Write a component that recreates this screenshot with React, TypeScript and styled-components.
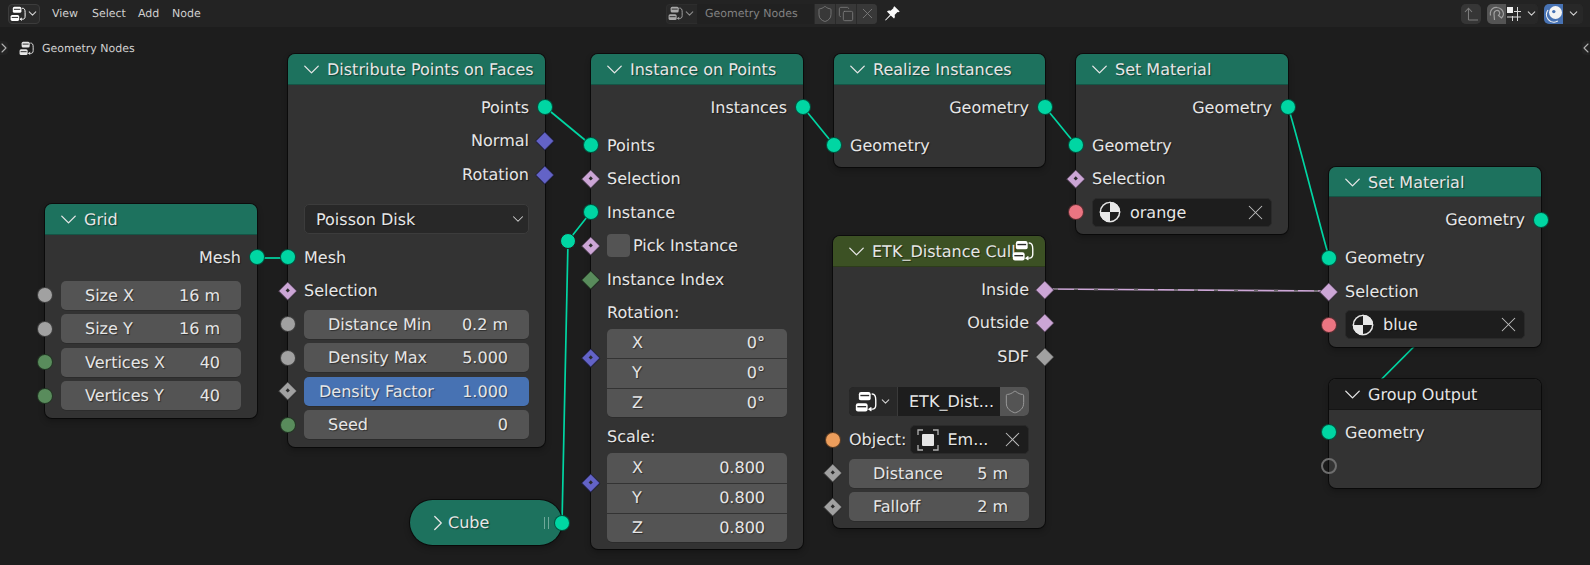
import React from 'react';
import styled, { createGlobalStyle } from 'styled-components';
import { ChevronDown, ChevronRight, X, Shield, Copy } from 'lucide-react';

const TEAL = '#00d6a3';
const BOOL = '#cca6d6';
const VEC = '#6363c7';
const FLOAT = '#a1a1a1';
const INT = '#598c5c';
const MAT = '#eb7582';
const OBJ = '#ed9e5c';

const GlobalStyle = createGlobalStyle`
    html, body { margin: 0; padding: 0; background: #1d1d1d; }
    body {
        font-family: "DejaVu Sans", "Liberation Sans", sans-serif;
        text-rendering: geometricPrecision;
    }
`;

const Page = styled.div`
    position: relative;
    width: 1590px;
    height: 565px;
    overflow: hidden;
    background: #1d1d1d;
    color: #e6e6e6;
`;

/* top bar */
const TopBar = styled.div`
    position: relative;
    z-index: 3;
    display: grid;
    grid-template-columns: 658px auto 1fr;
    align-items: center;
    height: 27px;
    padding: 0 7px 0 8px;
    background: #232323;
    font-size: 11px;
    color: #d0d0d0;
`;
const BarGroup = styled.div`
    display: flex;
    align-items: center;
`;
const BarEnd = styled(BarGroup)`
    justify-content: flex-end;
`;
const EditorButton = styled.div`
    display: flex;
    align-items: center;
    justify-content: center;
    width: 32px;
    height: 20px;
    box-sizing: border-box;
    border: 1px solid #3c3c3c;
    border-radius: 4px;
    background: #2a2a2a;
`;
const Menu = styled.span<{ $w: number }>`
    width: ${(p) => p.$w}px;
    white-space: nowrap;
`;
const Menus = styled(BarGroup)`
    margin-left: 12px;
`;
const Datablock = styled(BarGroup)`
    height: 20px;
    width: 211px;
    border-radius: 4px;
    overflow: hidden;
    background: #282828;
    box-shadow: inset 0 0 0 1px #2e2e2e;
`;
const DbIcon = styled.div`
    display: flex;
    align-items: center;
    justify-content: center;
    width: 31px;
    height: 100%;
    opacity: 0.6;
    border-right: 1px solid #1d1d1d;
`;
const DbName = styled.div`
    flex: 1;
    padding-left: 7px;
    font-size: 11px;
    line-height: 20px;
    color: #828282;
    background: #212121;
`;
const DbAction = styled.div`
    display: flex;
    align-items: center;
    justify-content: center;
    width: 20px;
    height: 100%;
    background: #383838;
    border-left: 1px solid #2a2a2a;
    color: #808080;
`;
const PinSlot = styled.div`
    display: flex;
    margin-left: 7px;
`;
const IconBtn = styled.div<{ $w: number; $bg: string }>`
    display: flex;
    align-items: center;
    justify-content: center;
    gap: 3px;
    width: ${(p) => p.$w}px;
    height: 20px;
    background: ${(p) => p.$bg};
`;
const Joined = styled(BarGroup)`
    margin-left: 6px;
    border-radius: 5px;
    overflow: hidden;
    box-shadow: inset 0 0 0 1px #2e2e2e;
`;
const Breadcrumb = styled.div`
    position: absolute;
    left: 19px;
    top: 40px;
    z-index: 3;
    display: flex;
    align-items: center;
    gap: 8px;
    height: 16px;
    font-size: 11px;
    color: #d0d0d0;
`;
const EdgeArrow = styled.div<{ $side: 'left' | 'right' }>`
    position: absolute;
    ${(p) => p.$side}: 0;
    top: 41px;
    z-index: 3;
    display: flex;
    align-items: center;
    justify-content: center;
    width: 8px;
    height: 14px;
    overflow: hidden;
    color: #b0b0b0;
    background: #232323;
    border-radius: ${(p) => (p.$side === 'left' ? '0 4px 4px 0' : '4px 0 0 4px')};
`;

/* wires */
const Wires = styled.svg`
    position: absolute;
    left: 0;
    top: 0;
`;

/* nodes */
const NodeBox = styled.div<{ $x: number; $y: number; $w: number; $h: number }>`
    position: absolute;
    left: ${(p) => p.$x}px;
    top: ${(p) => p.$y}px;
    width: ${(p) => p.$w}px;
    height: ${(p) => p.$h}px;
    border-radius: 7px;
    background: #333333;
    box-shadow: 0 0 0 1px rgba(0, 0, 0, 0.55), 0 3px 6px rgba(0, 0, 0, 0.3);
    font-size: 16px;
    text-shadow: 1px 1px 1px rgba(0, 0, 0, 0.45);
`;
const NodeHead = styled.div<{ $bg: string }>`
    position: relative;
    display: flex;
    align-items: center;
    gap: 9px;
    box-sizing: border-box;
    height: 30.5px;
    padding: 1.5px 0 0 16px;
    border-radius: 7px 7px 0 0;
    background: ${(p) => p.$bg};
    border-bottom: 1.5px solid rgba(0, 0, 0, 0.25);
    white-space: nowrap;
    svg { flex: none; }
`;
const HeadIcon = styled.div`
    position: absolute;
    right: 11px;
    top: 4px;
`;
const Body = styled.div`
    padding: 6px 16px;
    display: flex;
    flex-direction: column;
`;
const Row = styled.div<{ $mt?: number; $right?: boolean }>`
    position: relative;
    display: flex;
    flex: none;
    align-items: center;
    gap: 3px;
    height: 33.5px;
    margin-top: ${(p) => p.$mt ?? 0}px;
    justify-content: ${(p) => (p.$right ? 'flex-end' : 'flex-start')};
    white-space: nowrap;
`;
const Socket = styled.span<{ $c: string; $side?: 'left' | 'right'; $shape?: 'circle' | 'diamond'; $dot?: boolean; $hollow?: boolean }>`
    position: absolute;
    top: 50%;
    ${(p) => (p.$side === 'right' ? 'right' : 'left')}: ${(p) => (p.$shape === 'diamond' ? -22.75 : -24)}px;
    box-sizing: border-box;
    width: ${(p) => (p.$shape === 'diamond' ? 13.5 : 16)}px;
    height: ${(p) => (p.$shape === 'diamond' ? 13.5 : 16)}px;
    margin-top: ${(p) => (p.$shape === 'diamond' ? -6.75 : -8)}px;
    border: ${(p) => (p.$hollow ? '2px solid #6e6e6e' : '1px solid rgba(0, 0, 0, 0.6)')};
    background: ${(p) => (p.$hollow ? 'transparent' : p.$c)};
    border-radius: ${(p) => (p.$shape === 'diamond' ? '1px' : '50%')};
    transform: ${(p) => (p.$shape === 'diamond' ? 'rotate(45deg)' : 'none')};
    &::after {
        content: '';
        display: ${(p) => (p.$dot ? 'block' : 'none')};
        position: absolute;
        left: 50%;
        top: 50%;
        width: 3px;
        height: 3px;
        margin: -1.5px 0 0 -1.5px;
        background: #2b2b2b;
    }
`;
const SideSocket = styled(Socket)<{ $y: number }>`
    top: ${(p) => p.$y}px;
`;
const Field = styled.div<{ $active?: boolean; $pl?: number }>`
    display: flex;
    flex: 1;
    align-items: center;
    justify-content: space-between;
    box-sizing: border-box;
    height: 29px;
    padding: 0 21px 0 ${(p) => p.$pl ?? 24}px;
    border-radius: 5px;
    background: ${(p) => (p.$active ? '#4772b3' : '#545454')};
    box-shadow: 0 1px 0 rgba(0, 0, 0, 0.12);
`;
const FieldStack = styled.div<{ $mt: number }>`
    position: relative;
    flex: none;
    margin-top: ${(p) => p.$mt}px;
    display: flex;
    flex-direction: column;
    border-radius: 5px;
    background: #545454;
    box-shadow: 0 1px 0 rgba(0, 0, 0, 0.12);
`;
const StackItem = styled.div`
    display: flex;
    align-items: center;
    justify-content: space-between;
    box-sizing: border-box;
    height: 29.67px;
    padding: 0 22px 1.5px 25px;
    & + & { border-top: 1px solid #333333; }
`;
const Dropdown = styled.div`
    display: flex;
    flex: 1;
    align-items: center;
    justify-content: space-between;
    box-sizing: border-box;
    height: 30px;
    padding: 0 1px 0 11px;
    border-radius: 5px;
    border: 1px solid #3c3c3c;
    background: #282828;
`;
const Checkbox = styled.span`
    flex: none;
    width: 23px;
    height: 23px;
    border-radius: 4px;
    background: #545454;
`;
const DataField = styled.div`
    display: flex;
    flex: 1;
    align-items: center;
    gap: 9px;
    box-sizing: border-box;
    height: 29px;
    padding: 0 3px 0 6px;
    border-radius: 5px;
    border: 1px solid #2a2a2a;
    background: #1d1d1d;
    svg { flex: none; }
`;
const DataName = styled.span`
    flex: 1;
`;
const Template = styled.div`
    display: flex;
    flex: 1;
    align-items: stretch;
    height: 29px;
    border-radius: 5px;
    overflow: hidden;
    background: #1d1d1d;
`;
const TemplateIcon = styled.div`
    display: flex;
    align-items: center;
    justify-content: center;
    gap: 2px;
    width: 48px;
    background: #282828;
    border-right: 1px solid #3a3a3a;
`;
const TemplateName = styled.div`
    flex: 1;
    padding-left: 11px;
    line-height: 29px;
`;
const TemplateShield = styled.div`
    display: flex;
    align-items: center;
    justify-content: center;
    width: 29px;
    color: #9a9a9a;
    background: #545454;
`;
const Pill = styled.div`
    position: absolute;
    left: 410px;
    top: 500px;
    width: 152px;
    height: 45px;
    display: flex;
    align-items: center;
    box-sizing: border-box;
    padding-left: 15px;
    border-radius: 23px;
    background: #1d725e;
    box-shadow: 0 0 0 1px rgba(0, 0, 0, 0.55), 0 3px 6px rgba(0, 0, 0, 0.3);
    font-size: 16px;
    text-shadow: 1px 1px 1px rgba(0, 0, 0, 0.45);
    svg { margin-right: -3px; }
`;
const Grip = styled.span`
    position: absolute;
    right: 13px;
    top: 17px;
    width: 5px;
    height: 12px;
    border-left: 1.5px solid #6fa89a;
    border-right: 1.5px solid #6fa89a;
    box-sizing: border-box;
`;
const PillSocket = styled(Socket)`
    right: -8px;
`;

/* drawn icons */
const TreeIcon = ({ size = 16, color = '#ffffff' }: { size?: number; color?: string }) => (
    <svg width={size} height={size} viewBox="0 0 16 16" fill="none">
        <rect x="2.8" y="0.8" width="8.6" height="6" rx="1.6" fill={color} />
        <rect x="3.9" y="2.8" width="6.4" height="1" fill="#2a2a2a" />
        <rect x="0.6" y="8.9" width="8.6" height="6" rx="1.6" fill={color} />
        <rect x="1.7" y="10.9" width="6.4" height="1" fill="#2a2a2a" />
        <path d="M12.5 2.2c2 0 2.6 1.3 2.6 4.4v3.6c0 2.4-1.1 3-2.500 3h-2.200M11.600 12.200l-1.400 1 1.400 1" stroke={color} strokeWidth="1" strokeLinecap="round" />
    </svg>
);
const MaterialIcon = () => (
    <svg width="22" height="22" viewBox="0 0 22 22">
        <circle cx="11" cy="11" r="10.3" fill="#e8e8e8" />
        <path d="M11 11V.7A10.3 10.3 0 0 0 .7 11z" fill="#1d1d1d" />
        <path d="M11 11v10.3A10.3 10.3 0 0 0 21.3 11z" fill="#1d1d1d" />
        <circle cx="11" cy="11" r="9.6" fill="none" stroke="#e8e8e8" strokeWidth="1.4" />
    </svg>
);
const EmptyIcon = () => (
    <svg width="22" height="22" viewBox="0 0 22 22" fill="none" stroke="#b0b0b0" strokeWidth="1.3">
        <path d="M1 6V1h5M16 1h5v5M21 16v5h-5M6 21H1v-5" />
        <rect x="5" y="5" width="12" height="12" rx="1" fill="#e6e6e6" stroke="none" />
    </svg>
);
const PinIcon = () => (
    <svg width="17" height="17" viewBox="0 0 16 16" fill="#fafafa">
        <path d="M9.8 1.2l5 5-1.3.7-.8-.3-2.700 2.800c.5 1.400.2 2.600-.6 3.400L6.400 9.900 1.600 14.600 1 14l4.700-4.900-2.900-3C3.600 5.300 4.800 5 6.200 5.500l2.800-2.700-.2-.8z" />
    </svg>
);
const SnapUpIcon = () => (
    <svg width="16" height="16" viewBox="0 0 16 16" fill="none" stroke="#7d7d7d" strokeWidth="1.1">
        <path d="M5.500 14V2.500M2 6l3.500-3.800L9 6M5.500 14H15" />
    </svg>
);
const MagnetIcon = () => (
    <svg width="16" height="16" viewBox="0 0 16 16" fill="none" stroke="#a0a0a0" strokeWidth="1.2">
        <path d="M1.500 9.500l-.2-2.500C1.500 3.500 4.500 1.200 8 1.500c3.500.2 6.500 3 6.500 6.500 0 1.500-1 3-2 4l-3-2.500c1-1 1.500-2 1.200-3C10.200 5 8.800 4.300 7.500 4.500 5.800 4.800 5 6.200 5 8l.5 6" />
    </svg>
);
const SnapGridIcon = () => (
    <svg width="16" height="16" viewBox="0 0 16 16" fill="none" stroke="#d8d8d8" strokeWidth="1">
        <path d="M6.500 10V15M11.500 1V15M1 11h14M8 5.500h7" />
        <rect x="1" y="1" width="6" height="6" fill="#f0f0f0" stroke="none" />
    </svg>
);
const OverlayIcon = () => (
    <svg width="18" height="18" viewBox="0 0 18 18" fill="none">
        <circle cx="10.500" cy="7.500" r="6.500" fill="#f4f4f4" />
        <circle cx="8.800" cy="6.600" r="1.700" fill="#4772b3" />
        <path d="M3 5a7.500 7.500 0 0 0 9.800 11" stroke="#f4f4f4" strokeWidth="1.200" />
    </svg>
);

const Chevron = () => <ChevronDown size={27} strokeWidth={1.2} color="#e6e6e6" style={{ margin: '0 -6.5px' }} />;
const Small = () => <ChevronDown size={13} strokeWidth={2} color="#d0d0d0" />;
const Clear = () => <X size={25} strokeWidth={1} color="#c0c0c0" />;

function Head({ bg = '#1d725e', title }: { bg?: string; title: string }) {
    return (
        <NodeHead $bg={bg}>
            <Chevron />
            <span>{title}</span>
        </NodeHead>
    );
}

function Value({ label, value, active, socket, dot, shape, pl }: { label: string; value: string; active?: boolean; socket: string; dot?: boolean; shape?: 'circle' | 'diamond'; pl?: number }) {
    return (
        <Row>
            <Socket $c={socket} $shape={shape} $dot={dot} />
            <Field $active={active} $pl={pl}>
                <span>{label}</span>
                <span>{value}</span>
            </Field>
        </Row>
    );
}

function Vector({ mt, items }: { mt: number; items: string[][] }) {
    return (
        <FieldStack $mt={mt}>
            <SideSocket $c={VEC} $shape="diamond" $dot $y={29} />
            {items.map(([label, value]) => (
                <StackItem key={label}>
                    <span>{label}</span>
                    <span>{value}</span>
                </StackItem>
            ))}
        </FieldStack>
    );
}

function SetMaterial({ x, y, name, linked }: { x: number; y: number; name: string; linked?: boolean }) {
    return (
        <NodeBox $x={x} $y={y} $w={212} $h={180}>
            <Head title="Set Material" />
            <Body>
                <Row $right>Geometry<Socket $c={TEAL} $side="right" /></Row>
                <Row $mt={4.5}><Socket $c={TEAL} />Geometry</Row>
                <Row><Socket $c={BOOL} $shape="diamond" $dot={!linked} />Selection</Row>
                <Row>
                    <Socket $c={MAT} />
                    <DataField>
                        <MaterialIcon />
                        <DataName>{name}</DataName>
                        <Clear />
                    </DataField>
                </Row>
            </Body>
        </NodeBox>
    );
}

export default function App() {
    return (
        <Page>
            <GlobalStyle />
            <TopBar>
                <BarGroup>
                    <EditorButton><TreeIcon /><Small /></EditorButton>
                    <Menus>
                        <Menu $w={40}>View</Menu>
                        <Menu $w={46}>Select</Menu>
                        <Menu $w={34}>Add</Menu>
                        <Menu $w={40}>Node</Menu>
                    </Menus>
                </BarGroup>
                <BarGroup>
                    <Datablock>
                        <DbIcon><TreeIcon size={15} /><Small /></DbIcon>
                        <DbName>Geometry Nodes</DbName>
                        <DbAction><Shield size={18} strokeWidth={1.1} /></DbAction>
                        <DbAction><Copy size={16} strokeWidth={1.2} /></DbAction>
                        <DbAction><X size={17} strokeWidth={1.2} /></DbAction>
                    </Datablock>
                    <PinSlot><PinIcon /></PinSlot>
                </BarGroup>
                <BarEnd>
                    <Joined>
                        <IconBtn $w={20} $bg="#363636"><SnapUpIcon /></IconBtn>
                    </Joined>
                    <Joined>
                        <IconBtn $w={19} $bg="#545454"><MagnetIcon /></IconBtn>
                        <IconBtn $w={32} $bg="#282828"><SnapGridIcon /><Small /></IconBtn>
                    </Joined>
                    <Joined>
                        <IconBtn $w={19} $bg="#4772b3"><OverlayIcon /></IconBtn>
                        <IconBtn $w={20} $bg="#282828"><Small /></IconBtn>
                    </Joined>
                </BarEnd>
            </TopBar>

            <EdgeArrow $side="left"><ChevronRight size={16} strokeWidth={1.6} style={{ flex: 'none' }} /></EdgeArrow>
            <EdgeArrow $side="right"><ChevronRight size={16} strokeWidth={1.6} style={{ flex: 'none', transform: 'scaleX(-1)' }} /></EdgeArrow>
            <Breadcrumb><TreeIcon size={15} color="#e6e6e6" />Geometry Nodes</Breadcrumb>

            <Wires width={1590} height={565} fill="none">
                <g stroke={TEAL} strokeWidth="1.7">
                    <path d="M1541 219 L1329 432" />
                    <path d="M257 258 H288" />
                    <path d="M545 107 L591 145" />
                    <path d="M803 107 L834 145" />
                    <path d="M1045 107 L1076 145" />
                    <path d="M1288 107 C1296 130 1322 235 1329 257" />
                    <path d="M562 523 L568 241 L591 212" />
                </g>
                <path d="M1046 289 L1329 291" stroke={BOOL} strokeWidth="1.7" />
                <path d="M1046 289 L1329 291" stroke="#6b6b6b" strokeWidth="1.7" strokeDasharray="4 16" strokeDashoffset="-8" />
                <circle cx="568" cy="241" r="7.5" fill={TEAL} stroke="#1d1d1d" strokeWidth="1" />
            </Wires>

            <NodeBox $x={45} $y={204} $w={212} $h={214}>
                <Head title="Grid" />
                <Body>
                    <Row $right>Mesh<Socket $c={TEAL} $side="right" /></Row>
                    <Row $mt={4.5}>
                        <Socket $c={FLOAT} />
                        <Field><span>Size X</span><span>16 m</span></Field>
                    </Row>
                    <Value label="Size Y" value="16 m" socket={FLOAT} />
                    <Value label="Vertices X" value="40" socket={INT} />
                    <Value label="Vertices Y" value="40" socket={INT} />
                </Body>
            </NodeBox>

            <NodeBox $x={288} $y={54} $w={257} $h={393}>
                <Head title="Distribute Points on Faces" />
                <Body>
                    <Row $right>Points<Socket $c={TEAL} $side="right" /></Row>
                    <Row $right>Normal<Socket $c={VEC} $side="right" $shape="diamond" /></Row>
                    <Row $right>Rotation<Socket $c={VEC} $side="right" $shape="diamond" /></Row>
                    <Row $mt={11.25}>
                        <Dropdown>Poisson Disk<ChevronDown size={18} strokeWidth={1.4} color="#d0d0d0" /></Dropdown>
                    </Row>
                    <Row $mt={4.5}><Socket $c={TEAL} />Mesh</Row>
                    <Row><Socket $c={BOOL} $shape="diamond" $dot />Selection</Row>
                    <Value label="Distance Min" value="0.2 m" socket={FLOAT} />
                    <Value label="Density Max" value="5.000" socket={FLOAT} />
                    <Value label="Density Factor" value="1.000" socket={FLOAT} shape="diamond" dot active pl={15} />
                    <Value label="Seed" value="0" socket={INT} />
                </Body>
            </NodeBox>

            <NodeBox $x={591} $y={54} $w={212} $h={495}>
                <Head title="Instance on Points" />
                <Body>
                    <Row $right>Instances<Socket $c={TEAL} $side="right" /></Row>
                    <Row $mt={4.5}><Socket $c={TEAL} />Points</Row>
                    <Row><Socket $c={BOOL} $shape="diamond" $dot />Selection</Row>
                    <Row><Socket $c={TEAL} />Instance</Row>
                    <Row><Socket $c={BOOL} $shape="diamond" $dot /><Checkbox />Pick Instance</Row>
                    <Row><Socket $c={INT} $shape="diamond" />Instance Index</Row>
                    <Row>Rotation:</Row>
                    <Vector mt={-1} items={[['X', '0°'], ['Y', '0°'], ['Z', '0°']]} />
                    <Row $mt={2.5}>Scale:</Row>
                    <Vector mt={0} items={[['X', '0.800'], ['Y', '0.800'], ['Z', '0.800']]} />
                </Body>
            </NodeBox>

            <NodeBox $x={834} $y={54} $w={211} $h={113}>
                <Head title="Realize Instances" />
                <Body>
                    <Row $right>Geometry<Socket $c={TEAL} $side="right" /></Row>
                    <Row $mt={4.5}><Socket $c={TEAL} />Geometry</Row>
                </Body>
            </NodeBox>

            <SetMaterial x={1076} y={54} name="orange" />
            <SetMaterial x={1329} y={166.5} name="blue" linked />

            <NodeBox $x={833} $y={236} $w={212} $h={292}>
                <Head bg="#3c5124" title="ETK_Distance Cull" />
                <HeadIcon><TreeIcon size={22} /></HeadIcon>
                <Body>
                    <Row $right>Inside<Socket $c={BOOL} $side="right" $shape="diamond" /></Row>
                    <Row $right>Outside<Socket $c={BOOL} $side="right" $shape="diamond" /></Row>
                    <Row $right>SDF<Socket $c={FLOAT} $side="right" $shape="diamond" /></Row>
                    <Row $mt={11.75}>
                        <Template>
                            <TemplateIcon><TreeIcon size={22} /><Small /></TemplateIcon>
                            <TemplateName>ETK_Dist...</TemplateName>
                            <TemplateShield><Shield size={26} strokeWidth={0.9} /></TemplateShield>
                        </Template>
                    </Row>
                    <Row $mt={4.5}>
                        <Socket $c={OBJ} />
                        <span>Object:</span>
                        <DataField>
                            <EmptyIcon />
                            <DataName>Em...</DataName>
                            <Clear />
                        </DataField>
                    </Row>
                    <Value label="Distance" value="5 m" socket={FLOAT} shape="diamond" dot />
                    <Value label="Falloff" value="2 m" socket={FLOAT} shape="diamond" dot />
                </Body>
            </NodeBox>

            <NodeBox $x={1329} $y={379} $w={212} $h={109}>
                <Head bg="#1d1d1d" title="Group Output" />
                <Body>
                    <Row><Socket $c={TEAL} />Geometry</Row>
                    <Row><Socket $c="#6e6e6e" $hollow /></Row>
                </Body>
            </NodeBox>

            <Pill>
                <ChevronRight size={26} strokeWidth={1.2} color="#e6e6e6" />
                <span>Cube</span>
                <Grip />
                <PillSocket $c={TEAL} $side="right" />
            </Pill>
        </Page>
    );
}
